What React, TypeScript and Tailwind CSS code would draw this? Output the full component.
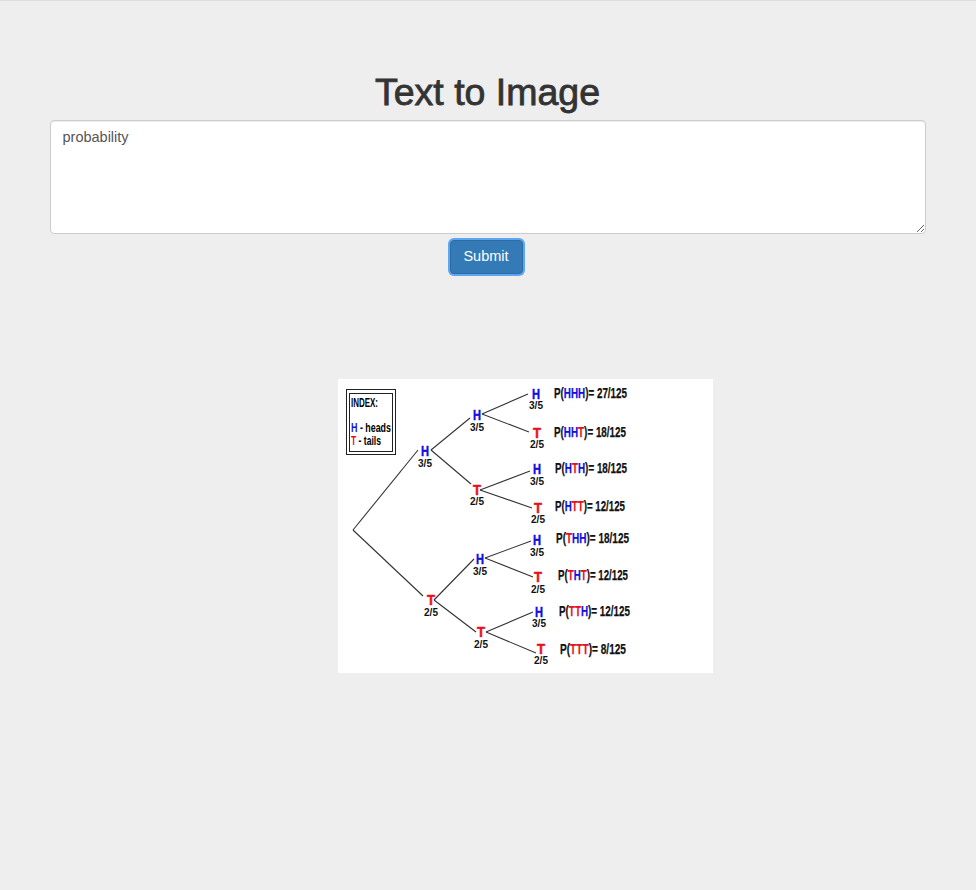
const blue = "#1010e0"
const red = "#e8101c"

// branch lines of the tree, in page coordinates (the svg viewBox starts at the image corner)
const branches = [
	[353, 530, 418, 450],
	[353, 530, 423, 596],
	[431, 450, 470, 418],
	[431, 450, 471, 484],
	[482, 414, 528, 394],
	[482, 414, 529, 432],
	[480, 490, 530, 471],
	[480, 490, 532, 508],
	[434, 600, 474, 559],
	[434, 600, 476, 632],
	[485, 558, 531, 541],
	[485, 558, 533, 577],
	[486, 632, 533, 612],
	[486, 632, 536, 653],
]

const nodes = [
	{ l: "H", x: 425, y: 456, f: "3/5", fy: 467 },
	{ l: "H", x: 477, y: 420, f: "3/5", fy: 431 },
	{ l: "T", x: 477, y: 495, f: "2/5", fy: 505 },
	{ l: "H", x: 536, y: 399, f: "3/5", fy: 409 },
	{ l: "T", x: 537, y: 438, f: "2/5", fy: 448 },
	{ l: "H", x: 537, y: 474, f: "3/5", fy: 485 },
	{ l: "T", x: 538, y: 513, f: "2/5", fy: 523 },
	{ l: "T", x: 431, y: 605, f: "2/5", fy: 616 },
	{ l: "H", x: 480, y: 564, f: "3/5", fy: 575 },
	{ l: "T", x: 481, y: 637, f: "2/5", fy: 648 },
	{ l: "H", x: 537, y: 545, f: "3/5", fy: 556 },
	{ l: "T", x: 538, y: 582, f: "2/5", fy: 593 },
	{ l: "H", x: 539, y: 617, f: "3/5", fy: 627 },
	{ l: "T", x: 541, y: 654, f: "2/5", fy: 664 },
]

const outcomes = [
	{ seq: "HHH", val: "27/125", x: 554, y: 398, w: 73 },
	{ seq: "HHT", val: "18/125", x: 554, y: 437, w: 72 },
	{ seq: "HTH", val: "18/125", x: 555, y: 473, w: 72 },
	{ seq: "HTT", val: "12/125", x: 555, y: 511, w: 70 },
	{ seq: "THH", val: "18/125", x: 556, y: 543, w: 73 },
	{ seq: "THT", val: "12/125", x: 558, y: 580, w: 70 },
	{ seq: "TTH", val: "12/125", x: 559, y: 616, w: 71 },
	{ seq: "TTT", val: "8/125", x: 560, y: 654, w: 66 },
]

function TreeImage() {
	return (
		<svg
			viewBox="338 379 375 294"
			className="block w-[375px] h-[294px] bg-white"
			fontFamily="'Liberation Sans', sans-serif"
			fontWeight="700"
		>
			<rect x="346.5" y="389.5" width="49" height="65" fill="none" stroke="#222" />
			<rect x="349.5" y="393.5" width="43" height="58" fill="none" stroke="#222" />
			<text x="351" y="407" fontSize="13" textLength="27" lengthAdjust="spacingAndGlyphs">
				INDEX:
			</text>
			<text x="351" y="432" fontSize="13" textLength="40" lengthAdjust="spacingAndGlyphs">
				<tspan fill={blue}>H</tspan> - heads
			</text>
			<text x="351" y="445" fontSize="13" textLength="30" lengthAdjust="spacingAndGlyphs">
				<tspan fill={red}>T</tspan> - tails
			</text>

			{branches.map(([x1, y1, x2, y2], i) => (
				<line key={i} x1={x1} y1={y1} x2={x2} y2={y2} stroke="#333" strokeWidth="1.1" />
			))}

			{nodes.map((n, i) => (
				<g key={i}>
					<text
						x={n.x - 4}
						y={n.y}
						fontSize="15"
						fill={n.l === "H" ? blue : red}
						stroke={n.l === "H" ? blue : red}
						strokeWidth="0.5"
						textLength="8"
						lengthAdjust="spacingAndGlyphs"
					>
						{n.l}
					</text>
					<text
						x={n.x - 7}
						y={n.fy}
						fontSize="11"
						fill="#111"
						textLength="14"
						lengthAdjust="spacingAndGlyphs"
					>
						{n.f}
					</text>
				</g>
			))}

			{outcomes.map((o) => (
				<text
					key={o.seq}
					x={o.x}
					y={o.y}
					fontSize="14"
					fill="#111"
					stroke="#111"
					strokeWidth="0.25"
					textLength={o.w}
					lengthAdjust="spacingAndGlyphs"
				>
					P(
					{o.seq.split("").map((c, i) => (
						<tspan key={i} fill={c === "H" ? blue : red} stroke={c === "H" ? blue : red}>
							{c}
						</tspan>
					))}
					)= {o.val}
				</text>
			))}
		</svg>
	)
}

export default function App() {
	return (
		<div className="min-h-screen bg-[#eeeeee] border-t border-[#dddddd] font-['Liberation_Sans',sans-serif]">
			<div className="pl-[49.5px] pr-[50.5px] pt-[71px]">
				<h1 className="text-center text-[37.5px] leading-[40px] text-[#333333] [-webkit-text-stroke:0.8px_#333333]">
					Text to Image
				</h1>
				<textarea
					className="block mt-[8px] w-full h-[114px] rounded border border-[#cccccc] bg-white px-3 py-1.5 text-[14.5px] leading-5 text-[#555555] shadow-[inset_0_1px_1px_rgba(0,0,0,0.075)] outline-none"
					defaultValue="probability"
				/>
				<div className="flex justify-center mt-[6px]">
					<button
						type="button"
						className="w-[73px] h-[34px] mr-[3px] rounded border border-[#2e6da4] bg-[#337ab7] text-[14.5px] text-white shadow-[0_0_0_2px_#5fa6f2]"
					>
						Submit
					</button>
				</div>
			</div>
			<div className="ml-[338px] mt-[105px]">
				<TreeImage />
			</div>
		</div>
	)
}
